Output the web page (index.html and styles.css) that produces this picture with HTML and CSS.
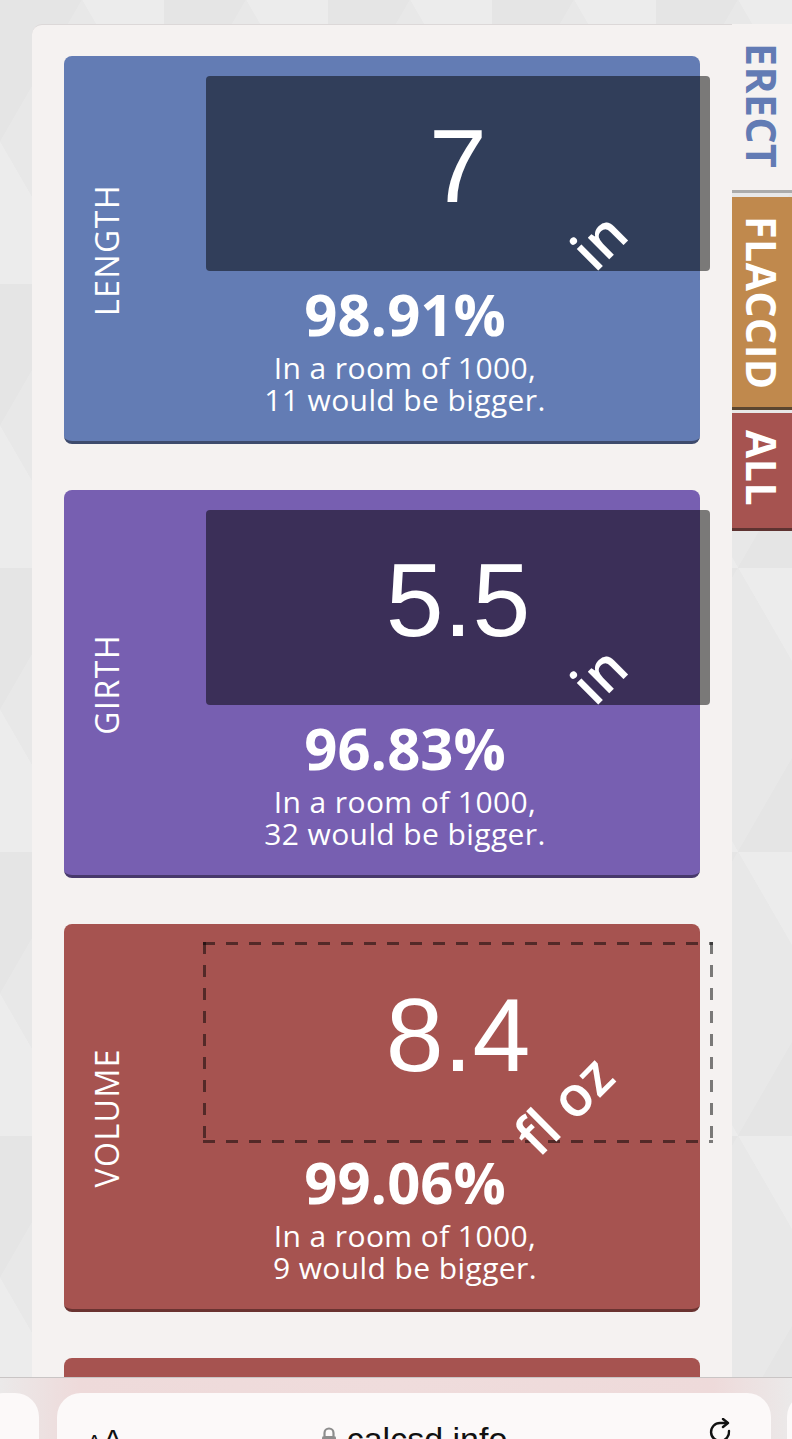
FILE: index.html
```html
<!DOCTYPE html>
<html lang="en">
<head>
<meta charset="utf-8">
<title>calcSD</title>
<link rel="stylesheet" href="styles.css">
</head>
<body>
<div class="page">
  <main class="panel">
    <section class="card card--length">
      <div class="card__label">LENGTH</div>
      <div class="card__body">
        <div class="measure">
          <span class="measure__value">7</span>
          <span class="measure__unit unit--in">in</span>
        </div>
        <div class="stats">
          <div class="stats__pct">98.91%</div>
          <p class="stats__text">In a room of 1000,<br>11 would be bigger.</p>
        </div>
      </div>
    </section>

    <section class="card card--girth">
      <div class="card__label">GIRTH</div>
      <div class="card__body">
        <div class="measure">
          <span class="measure__value">5.5</span>
          <span class="measure__unit unit--in">in</span>
        </div>
        <div class="stats">
          <div class="stats__pct">96.83%</div>
          <p class="stats__text">In a room of 1000,<br>32 would be bigger.</p>
        </div>
      </div>
    </section>

    <section class="card card--volume">
      <div class="card__label">VOLUME</div>
      <div class="card__body">
        <div class="measure measure--outline">
          <span class="measure__value">8.4</span>
          <span class="measure__unit unit--floz">fl oz</span>
        </div>
        <div class="stats">
          <div class="stats__pct">99.06%</div>
          <p class="stats__text">In a room of 1000,<br>9 would be bigger.</p>
        </div>
      </div>
    </section>

    <section class="card card--volume card--partial"></section>
  </main>

  <nav class="tabs">
    <a class="tab tab--erect">ERECT</a>
    <a class="tab tab--flaccid">FLACCID</a>
    <a class="tab tab--all">ALL</a>
  </nav>
</div>

<div class="browserbar">
  <div class="browserbar__side browserbar__side--left"></div>
  <div class="urlpill">
    <span class="urlpill__aa"><span class="aa-small">A</span>A</span>
    <span class="urlpill__addr">
      <svg class="lock" width="16" height="20" viewBox="0 0 16 20"><path d="M3.5 9V6a4.5 4.5 0 0 1 9 0v3" fill="none" stroke="#8d8d8d" stroke-width="2.2"/><rect x="1" y="9" width="14" height="11" rx="2" fill="#8d8d8d"/></svg>
      <span class="urlpill__host">calcsd.info</span>
    </span>
    <svg class="reload" width="30" height="30" viewBox="0 0 30 30"><path d="M22 13a9 9 0 1 1-9-8h7" fill="none" stroke="#111" stroke-width="2.4" stroke-linecap="round"/><path d="M16 1l5 4-5 4" fill="none" stroke="#111" stroke-width="2.4" stroke-linecap="round" stroke-linejoin="round"/></svg>
  </div>
  <div class="browserbar__side browserbar__side--right"></div>
</div>
</body>
</html>
```

FILE: styles.css
```css
* { box-sizing: border-box; }

html, body {
  margin: 0;
  padding: 0;
}

body {
  width: 792px;
  height: 1439px;
  overflow: hidden;
  font-family: "Open Sans", "Noto Sans", sans-serif;
  background-color: #e8e8e8;
  background-image:
    linear-gradient(60deg, rgba(255,255,255,0.18) 25%, transparent 25.2%, transparent 75%, rgba(255,255,255,0.18) 75.2%),
    linear-gradient(-60deg, rgba(0,0,0,0.012) 25%, transparent 25.2%, transparent 75%, rgba(0,0,0,0.012) 75.2%);
  background-size: 164px 284px;
}

.page {
  display: flex;
  align-items: flex-start;
  padding: 24px 0 0 32px;
}

.panel {
  width: 700px;
  min-height: 1415px;
  background: #f5f2f1;
  border-top: 1px solid #dcd8d8;
  border-top-left-radius: 10px;
  padding: 31px 32px 0 32px;
  display: flex;
  flex-direction: column;
  gap: 46px;
}

.card {
  position: relative;
  height: 388px;
  border-radius: 8px;
  border-bottom: 3px solid;
  display: grid;
  grid-template-columns: 86px 1fr;
  column-gap: 56px;
  color: #fff;
  flex-shrink: 0;
}

.card--length { background: #637cb4; border-bottom-color: #3e4b6d; }
.card--girth  { background: #775fb1; border-bottom-color: #47396b; }
.card--volume { background: #a65350; border-bottom-color: #6a3331; }

.card--partial { height: 120px; }

.card__label {
  align-self: center;
  justify-self: center;
  writing-mode: vertical-rl;
  transform: rotate(180deg);
  font-size: 32px;
  line-height: 40px;
  letter-spacing: 1.5px;
  margin-top: 3px;
}

.card__body {
  padding-top: 20px;
  display: flex;
  flex-direction: column;
  min-width: 0;
}

.measure {
  position: relative;
  width: 504px;
  height: 195px;
  margin-right: -10px;
  background: rgba(0, 0, 0, 0.5);
  border-radius: 4px;
  padding-top: 38px;
  text-align: center;
}

.measure--outline {
  --dash: rgba(0, 0, 0, 0.5);
  border-radius: 0;
  width: 510px;
  height: 201px;
  margin: -2px -13px -4px -3px;
  padding-top: 41px;
  background:
    repeating-linear-gradient(90deg, var(--dash) 0 12px, transparent 12px 23px) left top / 100% 3px no-repeat,
    repeating-linear-gradient(90deg, var(--dash) 0 12px, transparent 12px 23px) left bottom / 100% 3px no-repeat,
    repeating-linear-gradient(180deg, var(--dash) 0 12px, transparent 12px 23px) left top / 3px 100% no-repeat,
    repeating-linear-gradient(180deg, var(--dash) 0 12px, transparent 12px 23px) right top / 3px 100% no-repeat;
}

.measure__value {
  display: block;
  font-family: "Liberation Sans", Arial, sans-serif;
  font-size: 104px;
  line-height: 104px;
}

.measure__unit {
  position: absolute;
  font-size: 56px;
  font-weight: 600;
  line-height: 56px;
  white-space: nowrap;
  transform: rotate(-45deg);
}

.unit--in   { left: 366px; top: 136px; }
.unit--floz { left: 304px; top: 134px; }

.stats {
  width: 398px;
  text-align: center;
}

.stats__pct {
  margin-top: 10px;
  font-size: 58px;
  font-weight: 700;
  line-height: 66px;
}

.stats__text {
  margin: 5px 0 0;
  font-size: 30px;
  line-height: 32px;
  letter-spacing: 0.4px;
}

.tabs {
  width: 60px;
  display: flex;
  flex-direction: column;
}

.tab {
  display: block;
  writing-mode: vertical-rl;
  font-size: 41px;
  font-weight: 700;
  line-height: 60px;
  padding-top: 19px;
  color: #fff;
  border-bottom: 3px solid;
  letter-spacing: 0.5px;
}

.tab--erect {
  height: 169px;
  background: #f5f2f1;
  color: #627bb4;
  border-bottom-color: #ababab;
}

.tab--flaccid {
  margin-top: 4px;
  height: 213px;
  background: #c0894d;
  border-bottom-color: #5c4630;
}

.tab--all {
  margin-top: 3px;
  height: 118px;
  padding-top: 17px;
  background: #a65350;
  border-bottom-color: #5e3331;
}

/* Browser overlay bar */
.browserbar {
  position: fixed;
  left: 0;
  right: 0;
  bottom: 0;
  height: 62px;
  border-top: 1px solid #c9c5c5;
  background: linear-gradient(90deg, #ebe9e9 0%, #eedada 10%, #efdcdc 50%, #eedada 90%, #ebe9e9 100%);
}

.browserbar__side {
  position: absolute;
  top: 15px;
  width: 60px;
  height: 80px;
  border-radius: 24px;
  background: #fcf9f9;
}
.browserbar__side--left  { left: -21px; }
.browserbar__side--right { left: 787px; }

.urlpill {
  position: absolute;
  left: 57px;
  top: 15px;
  width: 714px;
  height: 80px;
  border-radius: 24px;
  background: #fcf9f9;
  display: flex;
  align-items: flex-start;
  padding: 23px 34px 0 30px;
  font-family: "Liberation Sans", Arial, sans-serif;
  color: #111;
}

.urlpill__aa {
  font-size: 30px;
  line-height: 30px;
  padding-top: 9px;
}
.aa-small { font-size: 22px; margin-right: 1px; }

.urlpill__addr {
  margin-left: 198px;
  display: flex;
  align-items: flex-start;
  gap: 10px;
}

.lock { margin-top: 11px; }

.urlpill__host {
  font-size: 34px;
  line-height: 34px;
  padding-top: 6px;
}

.reload { margin-left: auto; margin-top: 2px; }
```
